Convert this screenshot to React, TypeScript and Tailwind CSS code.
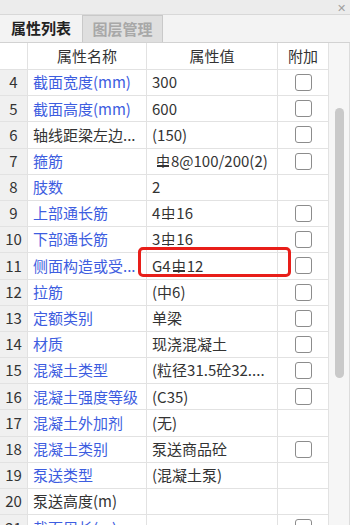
import React from "react";

type Row = {
  no: number;
  name: string;
  value: React.ReactNode;
  check: boolean;
  plain?: boolean;
};

// grade III rebar mark, drawn as 中 with a base bar
function Grade3() {
  return (
    <span className="relative mx-[1px] inline-block -translate-y-[1px] text-[14px] leading-none">
      中
      <span className="absolute left-[1px] right-[1px] bottom-[0px] h-[1.5px] bg-[#333]" />
    </span>
  );
}

const rows: Row[] = [
  { no: 4, name: "截面宽度(mm)", value: "300", check: true },
  { no: 5, name: "截面高度(mm)", value: "600", check: true },
  { no: 6, name: "轴线距梁左边...", value: "(150)", check: true, plain: true },
  {
    no: 7,
    name: "箍筋",
    value: (
      <span className="pl-[3px]">
        <Grade3 />8@100/200(2)
      </span>
    ),
    check: true,
  },
  { no: 8, name: "肢数", value: "2", check: false },
  {
    no: 9,
    name: "上部通长筋",
    value: (
      <span>
        4<Grade3 />16
      </span>
    ),
    check: true,
  },
  {
    no: 10,
    name: "下部通长筋",
    value: (
      <span>
        3<Grade3 />16
      </span>
    ),
    check: true,
  },
  {
    no: 11,
    name: "侧面构造或受...",
    value: (
      <span>
        G4<Grade3 />12
      </span>
    ),
    check: true,
  },
  { no: 12, name: "拉筋", value: "(中6)", check: true },
  { no: 13, name: "定额类别", value: "单梁", check: true },
  { no: 14, name: "材质", value: "现浇混凝土", check: true },
  { no: 15, name: "混凝土类型", value: "(粒径31.5砼32....", check: true },
  { no: 16, name: "混凝土强度等级", value: "(C35)", check: true },
  { no: 17, name: "混凝土外加剂", value: "(无)", check: false },
  { no: 18, name: "混凝土类别", value: "泵送商品砼", check: true },
  { no: 19, name: "泵送类型", value: "(混凝土泵)", check: false },
  { no: 20, name: "泵送高度(m)", value: "", check: false, plain: true },
  { no: 21, name: "截面周长(m)", value: "", check: true },
];

export default function App() {
  return (
    <div
      className="flex h-[525px] w-[350px] flex-col overflow-hidden bg-white text-[15px] text-[#333]"
      style={{ fontFamily: '"Noto Sans CJK SC", "Noto Sans", sans-serif' }}
    >
      {/* title strip */}
      <div className="flex h-[15px] shrink-0 items-center justify-end border-b border-[#d8d8d8] bg-[#ececec] pr-[4px]">
        <span className="text-[11px] leading-[11px] text-[#a0a0a0]">✕</span>
      </div>

      {/* tabs */}
      <div className="flex h-[28px] shrink-0 border-b border-[#d2d2d2] bg-[#f3f3f3]">
        <div className="flex w-[82px] items-center justify-center font-bold text-[#222]">
          属性列表
        </div>
        <div className="flex w-[81px] items-center justify-center border-x border-t border-[#c9c9c9] bg-[#dfdfdf] font-bold text-[#a8a8a8]">
          图层管理
        </div>
      </div>

      {/* grid */}
      <div className="relative flex flex-1">
        <div className="w-[329px]">
          <div className="flex h-[27px] border-b border-[#e2e2e2]">
            <div className="w-[28px] border-r border-[#e2e2e2]" />
            <div className="flex w-[119px] items-center justify-center border-r border-[#e2e2e2]">
              属性名称
            </div>
            <div className="flex w-[131px] items-center justify-center border-r border-[#e2e2e2]">
              属性值
            </div>
            <div className="flex w-[51px] items-center justify-center border-r border-[#e2e2e2]">
              附加
            </div>
          </div>

          {rows.map((r) => (
            <div key={r.no} className="flex h-[26.2px] border-b border-[#e2e2e2]">
              <div className="flex w-[28px] items-center justify-center border-r border-[#e2e2e2] bg-[#f0f0f0]">
                {r.no}
              </div>
              <div
                className={
                  "flex w-[119px] items-center overflow-hidden whitespace-nowrap border-r border-[#e2e2e2] pl-[5px] " +
                  (r.plain ? "text-[#333]" : "text-[#3d5de0]")
                }
              >
                {r.name}
              </div>
              <div className="flex w-[131px] items-center overflow-hidden whitespace-nowrap border-r border-[#e2e2e2] pl-[5px]">
                {r.value}
              </div>
              <div className="flex w-[51px] items-center justify-center border-r border-[#e2e2e2]">
                {r.check && (
                  <div className="h-[17px] w-[17px] rounded-[3px] border-[1.5px] border-[#8c8c8c] bg-white" />
                )}
              </div>
            </div>
          ))}
        </div>

        {/* scrollbar */}
        <div className="w-[21px] border-r border-[#dcdcdc] bg-[#f6f6f6]">
          <div className="ml-[6px] mt-[65px] h-[270px] w-[9px] rounded-full bg-[#c9c9c9]" />
        </div>

        {/* highlight */}
        <div className="absolute left-[138px] top-[204px] h-[30px] w-[153px] rounded-[5px] border-[3px] border-[#e81e19]" />
      </div>
    </div>
  );
}
